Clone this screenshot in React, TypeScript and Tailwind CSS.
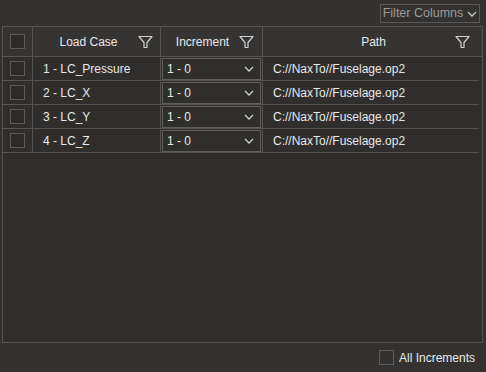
import React from 'react';

const rows = [
  { id: 1, name: '1 - LC_Pressure' },
  { id: 2, name: '2 - LC_X' },
  { id: 3, name: '3 - LC_Y' },
  { id: 4, name: '4 - LC_Z' }
];

function FunnelIcon() {
  return <svg width="15" height="14" viewBox="0 0 15 14" fill="none" stroke="#d0d0d0" strokeWidth="1.2">
      <path d="M1 1.5 H14 L9 7.5 V12.5 H6 V7.5 Z" strokeLinejoin="round" />
    </svg>;
}

function Chevron({ color = '#d0d0d0' }: { color?: string }) {
  return <svg width="10" height="6" viewBox="0 0 10 6" fill="none" stroke={color} strokeWidth="1.3">
      <path d="M1 1 L5 5 L9 1" />
    </svg>;
}

function Box() {
  return <div className="w-[15px] h-[15px] border border-[#5c5b59] bg-[#2c2b2a]" />;
}

export default function App() {
  return <div className="w-[486px] h-[372px] bg-[#333231] text-[#e8e8e8] text-[12px] flex flex-col" style={{ fontFamily: '"Liberation Sans", Arial, sans-serif' }}>
      <div className="h-[26px] flex justify-end items-start pt-[4px] pr-[6px]">
        <button className="h-[19px] w-[100px] border border-[#5a5957] text-[#9c9c9c] text-[12.5px] flex items-center justify-center gap-[4px]">
          Filter Columns
          <Chevron color="#c8c8c8" />
        </button>
      </div>

      <div className="ml-[2px] mr-[3px] h-[317px] border border-[#555452] bg-[#2f2e2d] flex flex-col">
        <div className="grid grid-cols-[30px_128px_102px_1fr] h-[30px] bg-[#353432] border-b border-[#555452]">
          <div className="flex items-center justify-center border-r border-[#555452]">
            <Box />
          </div>
          <div className="flex items-center justify-center relative border-r border-[#555452]">
            <span className="pr-[16px]">Load Case</span>
            <div className="absolute right-[7px] top-[8px]"><FunnelIcon /></div>
          </div>
          <div className="flex items-center justify-center relative border-r border-[#555452]">
            <span className="pr-[18px]">Increment</span>
            <div className="absolute right-[8px] top-[8px]"><FunnelIcon /></div>
          </div>
          <div className="flex items-center justify-center relative">
            <span className="pl-[2px]">Path</span>
            <div className="absolute right-[12px] top-[8px]"><FunnelIcon /></div>
          </div>
        </div>

        {rows.map(row => <div key={row.id} className="grid grid-cols-[30px_128px_102px_1fr] h-[24px] border-b border-[#555452] mr-[3px]">
            <div className="flex items-center justify-center border-r border-[#555452]">
              <Box />
            </div>
            <div className="flex items-center pl-[10px] border-r border-[#555452]">
              {row.name}
            </div>
            <div className="flex items-center px-[1px] border-r border-[#555452]">
              <div className="h-[22px] w-full border border-[#5e5d5b] flex items-center justify-between pl-[4px] pr-[6px]">
                <span>1 - 0</span>
                <Chevron />
              </div>
            </div>
            <div className="flex items-center pl-[10px]">
              C://NaxTo//Fuselage.op2
            </div>
          </div>)}
      </div>

      <div className="flex-1 flex items-center justify-end pr-[11px] gap-[5px]">
        <div className="w-[15px] h-[15px] border border-[#5c5b59]" />
        <span className="text-[12px]">All Increments</span>
      </div>
    </div>;
}
